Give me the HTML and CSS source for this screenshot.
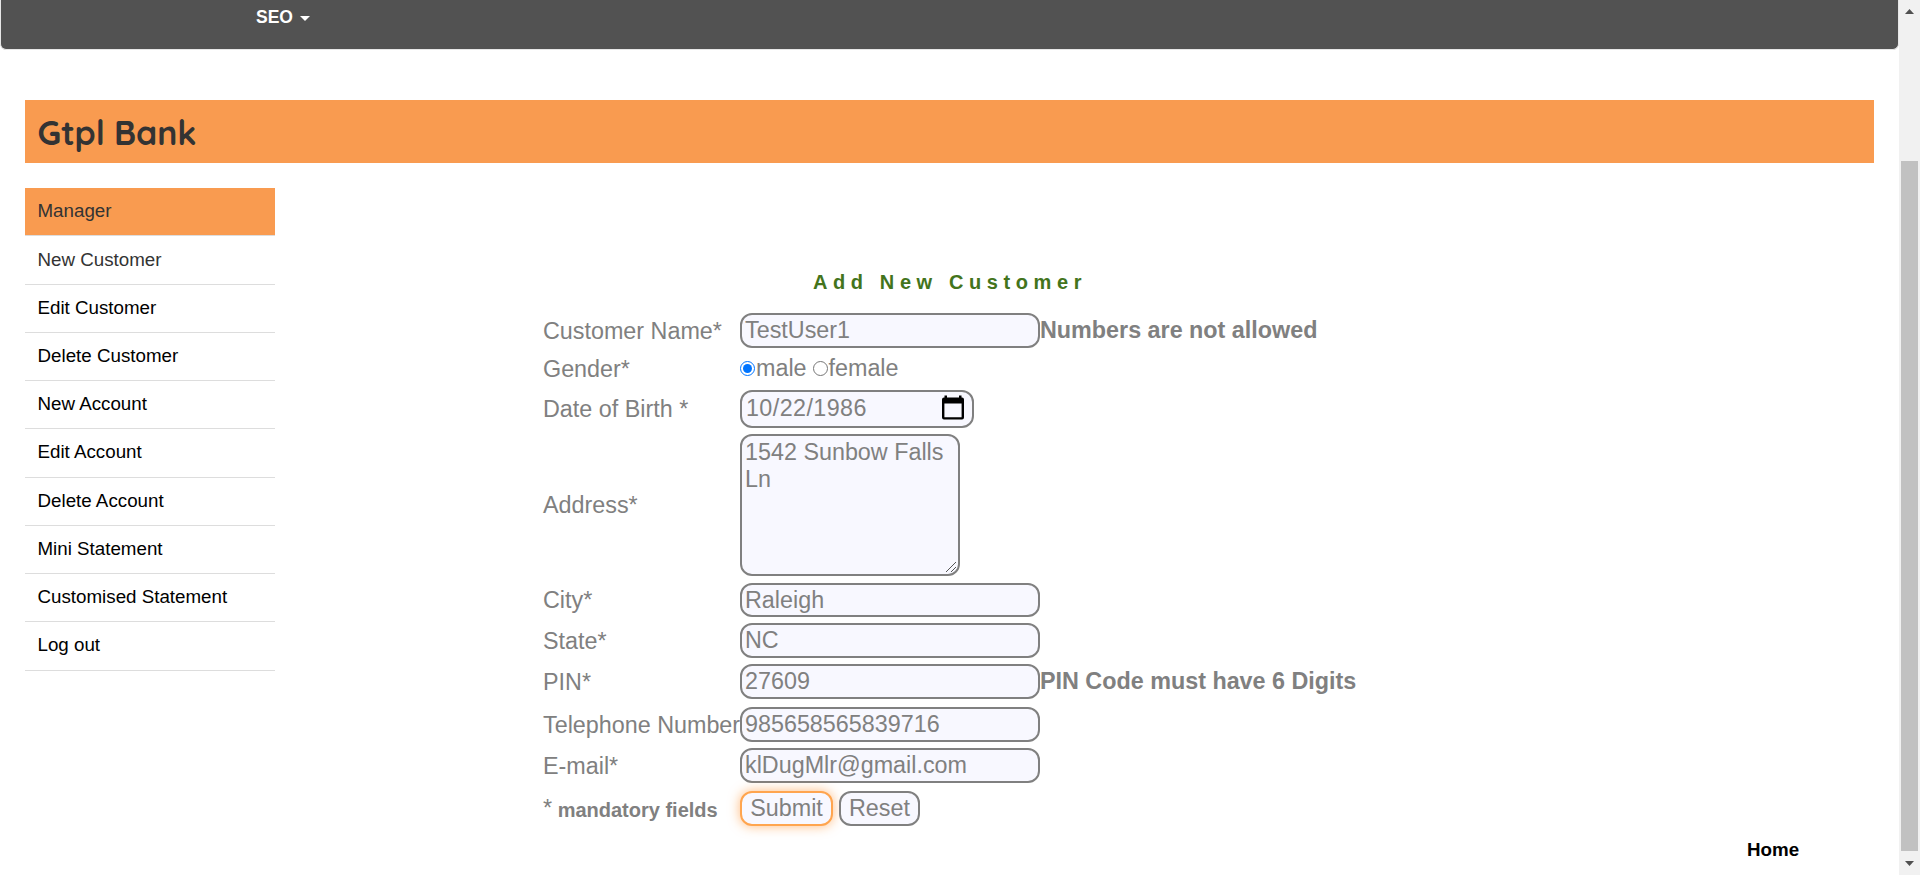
FILE: index.html
```html
<!DOCTYPE html>
<html lang="en">
<head>
<meta charset="utf-8">
<title>Gtpl Bank New Customer</title>
<link rel="stylesheet" href="styles.css">
</head>
<body>
<div class="page">
  <div class="content">
    <nav class="navbar"><a class="nav-link">SEO<span class="caret"></span></a></nav>
    <header class="banner"><h1>Gtpl Bank</h1></header>
    <div class="columns">
      <ul class="menu">
        <li class="active">Manager</li>
        <li class="current">New Customer</li>
        <li>Edit Customer</li>
        <li>Delete Customer</li>
        <li>New Account</li>
        <li>Edit Account</li>
        <li>Delete Account</li>
        <li>Mini Statement</li>
        <li>Customised Statement</li>
        <li>Log out</li>
      </ul>
      <main class="panel">
        <h2 class="heading">Add New Customer</h2>
        <form class="form">
          <div class="row row-name"><label>Customer Name*</label><input class="field" type="text" value="TestUser1"><span class="error">Numbers are not allowed</span></div>
          <div class="row row-gender"><label>Gender*</label><input class="radio" type="radio" name="g" checked><span class="male">male</span><input class="radio" type="radio" name="g"><span class="female">female</span></div>
          <div class="row row-date"><label>Date of Birth *</label>
            <div class="field date"><span>10/22/1986</span>
              <svg class="calendar" width="24" height="26" viewBox="0 0 24 26"><path fill-rule="evenodd" d="M3.500 0.500h2.500v2h12v-2h2.500v2h.5a2 2 0 0 1 2 2v18a2 2 0 0 1-2 2H3a2 2 0 0 1-2-2v-18a2 2 0 0 1 2-2h.5zM3.400 8.500v13.700h17.200V8.500z"/></svg>
            </div>
          </div>
          <div class="row row-address"><label>Address*</label>
            <div class="field area"><span>1542 Sunbow Falls<br>Ln</span>
              <svg class="grip" width="12" height="12" viewBox="0 0 12 12"><path d="M1 11L11 1M6 11L11 6" fill="none" stroke="#555" stroke-width="1"/></svg>
            </div>
          </div>
          <div class="row row-city"><label>City*</label><input class="field" type="text" value="Raleigh"></div>
          <div class="row row-state"><label>State*</label><input class="field" type="text" value="NC"></div>
          <div class="row row-pin"><label>PIN*</label><input class="field" type="text" value="27609"><span class="error">PIN Code must have 6 Digits</span></div>
          <div class="row row-phone"><label>Telephone Number</label><input class="field" type="text" value="985658565839716"></div>
          <div class="row row-mail"><label>E-mail*</label><input class="field" type="text" value="klDugMlr@gmail.com"></div>
          <div class="row"><label class="note"><span class="star">*</span> mandatory fields</label><button class="button submit" type="button">Submit</button><button class="button reset" type="button">Reset</button></div>
        </form>
      </main>
    </div>
    <footer class="footer"><a>Home</a></footer>
  </div>
  <aside class="scrollbar">
    <svg width="9" height="5" viewBox="0 0 9 5"><path d="M4.500 0L9 5H0z" fill="#505050"/></svg>
    <div class="thumb"></div>
    <svg width="9" height="5" viewBox="0 0 9 5"><path d="M0 0h9L4.500 5z" fill="#505050"/></svg>
  </aside>
</div>
</body>
</html>
```
FILE: styles.css
```css
* { box-sizing: border-box; }
body { margin: 0; overflow: hidden; background: #fff; font-family: "Liberation Sans", Arial, sans-serif; }
.page { display: flex; width: 1920px; height: 875px; }
.content { width: 1899px; display: flex; flex-direction: column; }
.navbar { height: 50px; margin: 0; background: #525252; border: 1px solid #e7e7e7; border-top: 0; border-radius: 0 0 6px 6px; padding: 7px 0 0 255px; }
.nav-link { display: flex; align-items: center; height: 21px; font-size: 17.5px; font-weight: bold; color: #fff; }
.caret { margin: 2px 0 0 7px; border: 5px solid transparent; border-top-color: #fff; border-bottom: 0; }
.banner { height: 63px; margin: 50px 25px 25px; background: #f99b50; padding: 1px 0 0 12.5px; display: flex; align-items: center; }
.banner h1 { margin: 0; font: 700 33.75px/50px Quicksand, Lato, sans-serif; letter-spacing: -.1px; color: #333; }
.columns { display: flex; }
.menu { width: 250px; margin: 0 0 0 25px; padding: 0; list-style: none; font-size: 18.75px; color: #000; }
.menu li { height: 48.25px; border-bottom: 1px solid #ddd; padding-left: 12.5px; line-height: 46.5px; }
.menu .active { background: #f99b50; color: #333; line-height: 46px; }
.menu .current { color: #333; line-height: 47px; }
.panel { margin-left: 268px; padding-top: 82px; }
.heading { margin: 0 0 19px 270px; height: 24px; font-size: 20px; line-height: 24px; letter-spacing: 5.6px; color: #43741c; }
.form { color: #808080; font-size: 23.33px; }
.row { display: flex; align-items: center; height: 35px; white-space: nowrap; }
.row label { width: 197px; flex: none; padding-top: 1px; }
.row-name { margin-bottom: 3px; }
.row-gender { margin-bottom: 4px; }
.row-date { height: 38px; margin-bottom: 6px; }
.row-address { height: 142px; margin-bottom: 7px; }
.row-city { height: 34px; margin-bottom: 6px; }
.row-state { margin-bottom: 6px; }
.row-pin { margin-bottom: 8px; }
.row-phone { margin-bottom: 6px; }
.row-mail { margin-bottom: 8px; }
.field, .button { margin: 0; border: 2px solid #808080; border-radius: 12px; background: #f8f8ff; color: #808080; font: 23.33px "Liberation Sans", Arial, sans-serif; }
.field { width: 300px; height: 100%; padding: 0 3px; }
.error { font-weight: bold; }
.radio { width: 15px; height: 15px; margin: 0 1px 0 0; }
.male { width: 56.500px; }
.date { width: 234px; display: flex; align-items: center; justify-content: space-between; padding: 0 7px 1px 4px; letter-spacing: .4px; }
.calendar { margin-bottom: 2px; }
.area { width: 220px; display: flex; justify-content: space-between; align-items: flex-start; line-height: 27px; padding: 3px 1px 1px 3px; }
.area span { width: 198px; }
.grip { align-self: flex-end; flex: none; margin-left: -8px; }
.row .note { font-size: 20px; font-weight: bold; padding-top: 3px; }
.star { font-size: 23.33px; font-weight: normal; line-height: 20px; position: relative; top: -1px; }
.button { height: 35px; padding: 0; }
.submit { width: 93px; border-color: #ffa54f; box-shadow: 0 0 12px rgba(255,140,40,.6); }
.reset { width: 81px; margin-left: 6px; }
.footer { padding: 12px 0 0 1747px; font-size: 18.75px; line-height: 24px; font-weight: bold; color: #000; }
.scrollbar { width: 21px; background: #f1f1f1; display: flex; flex-direction: column; align-items: center; padding-top: 9px; }
.thumb { width: 17px; height: 690px; margin: 147px 0 10px; background: #c1c1c1; flex: none; }
```
